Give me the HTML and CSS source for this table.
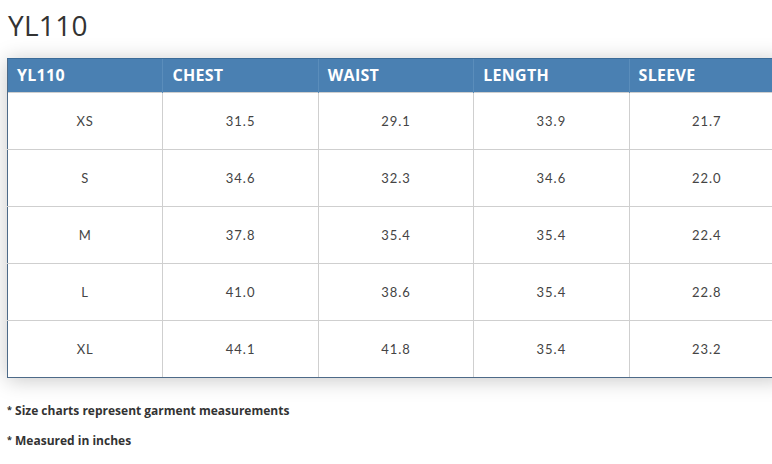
FILE: index.html
```html
<!DOCTYPE html>
<html>
<head>
<meta charset="utf-8">
<link rel="stylesheet" href="styles.css">
</head>
<body>
<div class="page">
  <h1 class="title">YL110</h1>
  <div class="chart">
    <table class="sizes">
      <thead>
        <tr><th>YL110</th><th>CHEST</th><th>WAIST</th><th>LENGTH</th><th>SLEEVE</th></tr>
      </thead>
      <tbody>
        <tr><td>XS</td><td>31.5</td><td>29.1</td><td>33.9</td><td>21.7</td></tr>
        <tr><td>S</td><td>34.6</td><td>32.3</td><td>34.6</td><td>22.0</td></tr>
        <tr><td>M</td><td>37.8</td><td>35.4</td><td>35.4</td><td>22.4</td></tr>
        <tr><td>L</td><td>41.0</td><td>38.6</td><td>35.4</td><td>22.8</td></tr>
        <tr><td>XL</td><td>44.1</td><td>41.8</td><td>35.4</td><td>23.2</td></tr>
      </tbody>
    </table>
  </div>
  <p class="note"><span class="ast">*</span> Size charts represent garment measurements</p>
  <p class="note"><span class="ast">*</span> Measured in inches</p>
</div>
</body>
</html>
```
FILE: styles.css
```css
html, body {
  margin: 0;
  padding: 0;
  background: #fff;
  overflow: hidden;
}
.page {
  width: 772px;
  height: 464px;
  overflow: hidden;
  padding: 9px 0 0 7px;
  box-sizing: border-box;
  font-family: "Open Sans", sans-serif;
  color: #333;
}
.title {
  margin: 0 0 0 1px;
  font-weight: 400;
  font-size: 28px;
  line-height: 32px;
  letter-spacing: 0.3px;
  color: #333;
}
.chart {
  margin-top: 17px;
  width: 778px;
  box-shadow: 0 2px 20px rgba(0,0,0,0.22);
}
.sizes {
  border-collapse: collapse;
  width: 778px;
  table-layout: fixed;
  border: 1px solid #4d6a88;
}
.sizes th {
  background: #4a80b2;
  color: #fff;
  font-family: "Open Sans", sans-serif;
  font-weight: 700;
  font-size: 16px;
  letter-spacing: 0.3px;
  text-align: left;
  padding: 0 9px 1px;
  height: 32px;
  border-left: 1px solid #5a8dbb;
  border-top: 1px solid #3b6b98;
}
.sizes th:first-child { border-left: none; }
.sizes td {
  height: 56px;
  padding: 0;
  text-align: center;
  font-family: "Lato", sans-serif;
  font-size: 13px;
  letter-spacing: 1px;
  color: #444;
  border: 1px solid #cfcfcf;
}
.sizes tbody tr:last-child td { border-bottom: 1px solid #4d6a88; }
.sizes td:first-child { border-left: 1px solid #4d6a88; }
.note {
  margin: 0;
  font-family: "Open Sans", sans-serif;
  font-weight: 700;
  font-size: 12px;
  color: #333;
  line-height: 16px;
}
.ast {
  font-size: 9px;
  vertical-align: 2px;
}
.note:first-of-type { margin-top: 24px; }
.note + .note { margin-top: 13px; }
```
